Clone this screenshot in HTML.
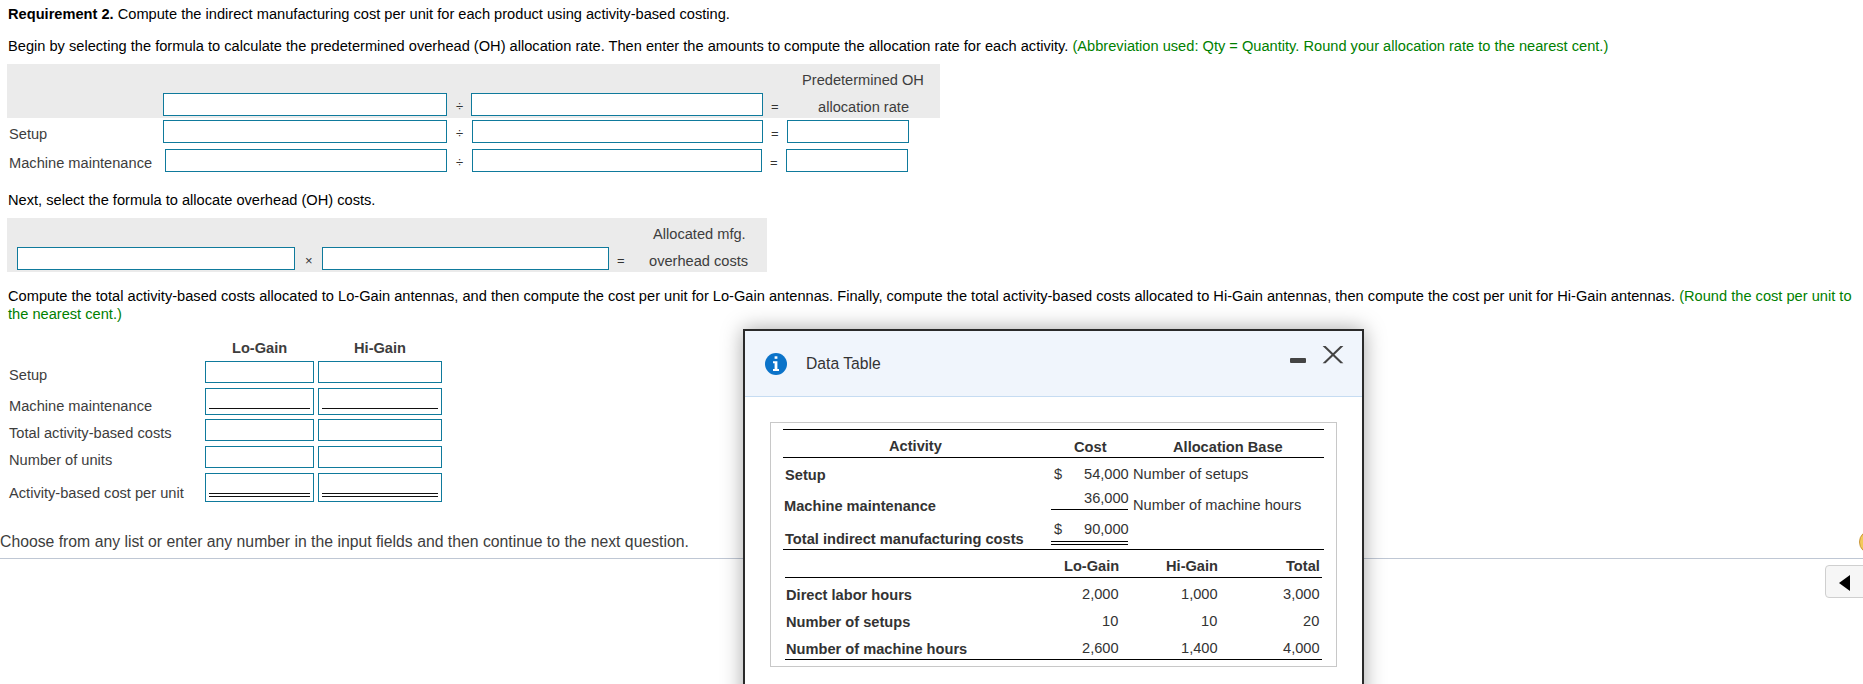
<!DOCTYPE html>
<html><head><meta charset="utf-8">
<style>
html,body{margin:0;padding:0;background:#fff;width:1863px;height:684px;overflow:hidden;position:relative;}
body{font-family:"Liberation Sans",sans-serif;font-size:14.63px;color:#000;}
.a{position:absolute;white-space:nowrap;line-height:16px;}
.g{color:#008000;}
.lbl{color:#3d3d3d;}
.box{position:absolute;background:#ebebeb;}
.in{position:absolute;box-sizing:border-box;border:1px solid #0f7a9c;background:#fff;}
.op{position:absolute;color:#333;font-size:13px;line-height:14px;}
.ul{position:absolute;height:2px;background:#222;}
.dt{position:absolute;white-space:nowrap;line-height:16px;color:#333;}
.b,b{font-weight:bold;}
.hl{position:absolute;height:1px;background:#000;}
</style></head><body>

<div class="a" style="left:8px;top:6px;"><b>Requirement 2.</b> Compute the indirect manufacturing cost per unit for each product using activity-based costing.</div>
<div class="a" style="left:8px;top:38px;">Begin by selecting the formula to calculate the predetermined overhead (OH) allocation rate. Then enter the amounts to compute the allocation rate for each activity. <span class="g">(Abbreviation used: Qty = Quantity. Round your allocation rate to the nearest cent.)</span></div>

<!-- formula 1 -->
<div class="box" style="left:7px;top:64px;width:933px;height:54px;"></div>
<div class="a lbl" style="left:802px;top:72px;">Predetermined OH</div>
<div class="a lbl" style="left:818px;top:99px;">allocation rate</div>
<div class="in" style="left:163px;top:93px;width:284px;height:23px;"></div>
<div class="op" style="left:456px;top:100px;">÷</div>
<div class="in" style="left:471px;top:93px;width:292px;height:23px;"></div>
<div class="op" style="left:771px;top:100px;">=</div>

<div class="a lbl" style="left:9px;top:126px;">Setup</div>
<div class="in" style="left:163px;top:120px;width:284px;height:23px;"></div>
<div class="op" style="left:456px;top:127px;">÷</div>
<div class="in" style="left:472px;top:120px;width:291px;height:23px;"></div>
<div class="op" style="left:771px;top:127px;">=</div>
<div class="in" style="left:787px;top:120px;width:122px;height:23px;"></div>

<div class="a lbl" style="left:9px;top:155px;">Machine maintenance</div>
<div class="in" style="left:165px;top:149px;width:282px;height:23px;"></div>
<div class="op" style="left:456px;top:156px;">÷</div>
<div class="in" style="left:472px;top:149px;width:290px;height:23px;"></div>
<div class="op" style="left:770px;top:156px;">=</div>
<div class="in" style="left:786px;top:149px;width:122px;height:23px;"></div>

<div class="a" style="left:8px;top:192px;">Next, select the formula to allocate overhead (OH) costs.</div>

<!-- formula 2 -->
<div class="box" style="left:7px;top:218px;width:760px;height:54px;"></div>
<div class="a lbl" style="left:653px;top:226px;">Allocated mfg.</div>
<div class="a lbl" style="left:649px;top:253px;">overhead costs</div>
<div class="in" style="left:17px;top:247px;width:278px;height:23px;"></div>
<div class="op" style="left:305px;top:254px;">×</div>
<div class="in" style="left:322px;top:247px;width:287px;height:23px;"></div>
<div class="op" style="left:617px;top:254px;">=</div>

<div class="a" style="left:8px;top:287px;line-height:18px;">Compute the total activity-based costs allocated to Lo-Gain antennas, and then compute the cost per unit for Lo-Gain antennas. Finally, compute the total activity-based costs allocated to Hi-Gain antennas, then compute the cost per unit for Hi-Gain antennas. <span class="g">(Round the cost per unit to<br>the nearest cent.)</span></div>

<!-- table -->
<div class="a lbl b" style="left:232px;top:340px;">Lo-Gain</div>
<div class="a lbl b" style="left:354px;top:340px;">Hi-Gain</div>

<div class="a lbl" style="left:9px;top:367px;">Setup</div>
<div class="in" style="left:205px;top:361px;width:109px;height:22px;"></div>
<div class="in" style="left:318px;top:361px;width:124px;height:22px;"></div>

<div class="a lbl" style="left:9px;top:398px;">Machine maintenance</div>
<div class="in" style="left:205px;top:388px;width:109px;height:27px;"></div>
<div class="in" style="left:318px;top:388px;width:124px;height:27px;"></div>
<div class="ul" style="left:209px;top:408px;width:101px;height:1px;background:#111;"></div>
<div class="ul" style="left:322px;top:408px;width:116px;height:1px;background:#111;"></div>

<div class="a lbl" style="left:9px;top:425px;">Total activity-based costs</div>
<div class="in" style="left:205px;top:419px;width:109px;height:22px;"></div>
<div class="in" style="left:318px;top:419px;width:124px;height:22px;"></div>

<div class="a lbl" style="left:9px;top:452px;">Number of units</div>
<div class="in" style="left:205px;top:446px;width:109px;height:22px;"></div>
<div class="in" style="left:318px;top:446px;width:124px;height:22px;"></div>

<div class="a lbl" style="left:9px;top:485px;">Activity-based cost per unit</div>
<div class="in" style="left:205px;top:473px;width:109px;height:29px;"></div>
<div class="in" style="left:318px;top:473px;width:124px;height:29px;"></div>
<div class="ul" style="left:209px;top:493px;width:101px;height:1px;background:#111;"></div>
<div class="ul" style="left:209px;top:496px;width:101px;height:1px;background:#111;"></div>
<div class="ul" style="left:322px;top:493px;width:116px;height:1px;background:#111;"></div>
<div class="ul" style="left:322px;top:496px;width:116px;height:1px;background:#111;"></div>

<div class="a lbl" style="left:0px;top:533px;font-size:15.77px;line-height:18px;">Choose from any list or enter any number in the input fields and then continue to the next question.</div>
<div style="position:absolute;left:0;top:558px;width:1863px;height:1px;background:#bfc7d4;"></div>

<!-- right controls -->
<div style="position:absolute;left:1859px;top:530px;width:24px;height:24px;border-radius:50%;background:#f3c95a;box-sizing:border-box;border:1px solid #c9953a;"></div>
<div style="position:absolute;left:1825px;top:565px;width:50px;height:33px;box-sizing:border-box;border:1px solid #cfcfcf;border-radius:4px;background:#f6f6f6;"></div>
<svg style="position:absolute;left:1839px;top:575px;" width="12" height="17"><path d="M11 0 L11 16 L0 8 Z" fill="#000"/></svg>

<!-- dialog -->
<div style="position:absolute;left:743px;top:329px;width:621px;height:400px;box-sizing:border-box;border:2px solid #2a2a2a;background:#fff;box-shadow:0 0 20px rgba(0,0,0,0.35);">
  <div style="position:absolute;left:0;top:0;width:617px;height:65px;background:#f0f5fc;border-bottom:1px solid #c6dcf2;"></div>
</div>
<svg style="position:absolute;left:764px;top:352px;" width="24" height="24" viewBox="0 0 24 24">
  <circle cx="12" cy="12" r="11" fill="#0b73c9"/>
  <rect x="10.6" y="4.3" width="2.8" height="2.5" fill="#fff"/>
  <path d="M9 9.3 H13.4 V17 H15 V19 H9 V17 H10.6 V11.3 H9 Z" fill="#fff"/>
</svg>
<div class="a" style="left:806px;top:355px;font-size:15.68px;line-height:18px;color:#333;">Data Table</div>
<div style="position:absolute;left:1290px;top:358px;width:16px;height:5px;background:#444;border-radius:1px;"></div>
<svg style="position:absolute;left:1322px;top:345px;" width="22" height="19"><path d="M0.6 1 H3.6 L21.4 18.3 H18.4 Z M18.4 1 H21.4 L3.6 18.3 H0.6 Z" fill="#444"/></svg>

<!-- data table -->
<div style="position:absolute;left:770px;top:422px;width:567px;height:245px;box-sizing:border-box;border:1px solid #c8c8c8;"></div>
<div class="hl" style="left:783px;top:429px;width:541px;"></div>
<div class="dt b" style="left:889px;top:438px;">Activity</div>
<div class="dt b" style="left:1074px;top:439px;">Cost</div>
<div class="dt b" style="left:1173px;top:439px;">Allocation Base</div>
<div class="hl" style="left:783px;top:457px;width:541px;"></div>
<div class="dt b" style="left:785px;top:467px;">Setup</div>
<div class="dt" style="left:1054px;top:466px;">$</div>
<div class="dt" style="left:1084px;top:466px;">54,000</div>
<div class="dt" style="left:1133px;top:466px;">Number of setups</div>
<div class="dt b" style="left:784px;top:498px;">Machine maintenance</div>
<div class="dt" style="left:1084px;top:490px;">36,000</div>
<div class="hl" style="left:1051px;top:509px;width:77px;"></div>
<div class="dt" style="left:1133px;top:497px;">Number of machine hours</div>
<div class="dt b" style="left:785px;top:531px;">Total indirect manufacturing costs</div>
<div class="dt" style="left:1054px;top:521px;">$</div>
<div class="dt" style="left:1084px;top:521px;">90,000</div>
<div class="hl" style="left:1051px;top:541px;width:77px;"></div>
<div class="hl" style="left:1051px;top:544px;width:77px;"></div>
<div class="hl" style="left:783px;top:549px;width:541px;"></div>
<div class="dt b" style="left:1064px;top:558px;">Lo-Gain</div>
<div class="dt b" style="left:1166px;top:558px;">Hi-Gain</div>
<div class="dt b" style="left:1286px;top:558px;">Total</div>
<div class="hl" style="left:785px;top:577px;width:537px;"></div>
<div class="dt b" style="left:786px;top:587px;">Direct labor hours</div>
<div class="dt" style="left:1082px;top:586px;">2,000</div>
<div class="dt" style="left:1181px;top:586px;">1,000</div>
<div class="dt" style="left:1283px;top:586px;">3,000</div>
<div class="dt b" style="left:786px;top:614px;">Number of setups</div>
<div class="dt" style="left:1102px;top:613px;">10</div>
<div class="dt" style="left:1201px;top:613px;">10</div>
<div class="dt" style="left:1303px;top:613px;">20</div>
<div class="dt b" style="left:786px;top:641px;">Number of machine hours</div>
<div class="dt" style="left:1082px;top:640px;">2,600</div>
<div class="dt" style="left:1181px;top:640px;">1,400</div>
<div class="dt" style="left:1283px;top:640px;">4,000</div>
<div class="hl" style="left:785px;top:659px;width:537px;"></div>

</body></html>
